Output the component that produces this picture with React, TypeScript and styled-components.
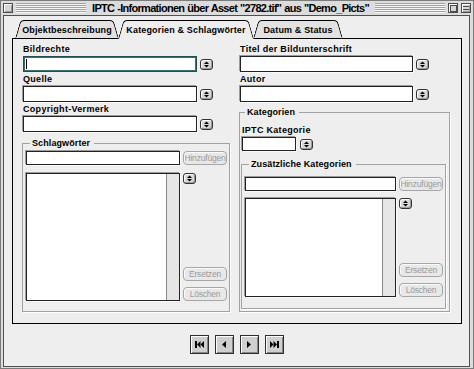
import React from "react";
import styled, { createGlobalStyle } from "styled-components";

const UI = `"Liberation Sans", Arial, sans-serif`;

const GlobalStyle = createGlobalStyle`
  html, body {
    margin: 0;
    padding: 0;
    background: #dcdcdc;
  }
  body {
    font-family: ${UI};
    color: #000;
  }
`;

const Window = styled.div`
  width: 474px;
  height: 369px;
  box-sizing: border-box;
  border: 1px solid #7b7b7b;
  background: #dcdcdc;
  display: flex;
  flex-direction: column;
`;

const TitleBar = styled.div`
  height: 14px;
  display: flex;
  align-items: center;
  gap: 3px;
  padding: 0 2px;
`;

const BoxButton = styled.div`
  position: relative;
  width: 10px;
  height: 10px;
  box-sizing: border-box;
  border: 1px solid #4b4b4b;
  background: #d6d6d6;
  box-shadow: inset 1px 1px 0 #fff, inset -1px -1px 0 #9a9a9a;
  flex: none;
`;

const ZoomMark = styled.div`
  position: absolute;
  left: 1px;
  top: 1px;
  width: 5px;
  height: 5px;
  border: 1px solid #4b4b4b;
`;

const ShadeMark = styled.div`
  position: absolute;
  left: 1px;
  right: 1px;
  top: 2px;
  height: 2px;
  border-top: 1px solid #4b4b4b;
  border-bottom: 1px solid #4b4b4b;
`;

const Stripes = styled.div`
  flex: 1;
  height: 10px;
  background: repeating-linear-gradient(
    to bottom,
    #a2a2a2 0 1px,
    #f6f6f6 1px 2px
  );
`;

const TitleText = styled.div`
  padding: 0 3px;
  font: bold 11px ${UI};
  line-height: 14px;
  white-space: nowrap;
  letter-spacing: -0.7px;
  word-spacing: 0.5px;
`;

const Content = styled.div`
  flex: 1;
  margin: 0 3px 1px 2px;
  border: 1px solid #505050;
  background: #eeeeee;
  display: flex;
  flex-direction: column;
  min-height: 0;
`;

const TabStrip = styled.div`
  display: flex;
  align-items: flex-end;
  margin: 4px 0 -1px 11px;
  height: 19px;
  position: relative;
  z-index: 1;
`;

const Tab = styled.div<{ $w: number; $active?: boolean }>`
  position: relative;
  z-index: ${(p) => (p.$active ? 2 : 1)};
  width: ${(p) => p.$w}px;
  height: 19px;
  margin-right: -1px;
  box-sizing: border-box;
  display: flex;
  align-items: center;
  justify-content: center;
  padding-top: 1px;
  font: bold 9px ${UI};
  letter-spacing: 0.15px;
  white-space: nowrap;

  &::before,
  &::after {
    content: "";
    position: absolute;
    top: 0;
    bottom: 0;
    z-index: -1;
    background: ${(p) => (p.$active ? "#eeeeee" : "#e2e2e2")};
    border: 1px solid #000;
    border-bottom-color: ${(p) => (p.$active ? "transparent" : "#000")};
  }
  &::before {
    left: 0;
    right: 50%;
    border-right: none;
    border-top-left-radius: 4px;
    transform: skewX(-16deg);
    transform-origin: bottom left;
  }
  &::after {
    left: 50%;
    right: 0;
    border-left: none;
    border-top-right-radius: 4px;
    transform: skewX(16deg);
    transform-origin: bottom right;
  }
`;

const Panel = styled.div`
  margin: 0 7px 0 8px;
  height: 286px;
  box-sizing: border-box;
  border: 1px solid #000;
  display: grid;
  grid-template-columns: 208px 211px;
  column-gap: 9px;
  padding: 3px 11px 11px 9px;
`;

const Column = styled.div`
  display: flex;
  flex-direction: column;
  min-height: 0;
`;

const FieldLabel = styled.div`
  height: 14px;
  padding-left: 1px;
  font: bold 9px ${UI};
  line-height: 14px;
  letter-spacing: 0.3px;
  white-space: nowrap;
`;

const FieldRow = styled.div<{ $h: number; $gap: number }>`
  height: ${(p) => p.$h}px;
  display: flex;
  align-items: center;
  gap: ${(p) => p.$gap}px;
  padding-left: 1px;
`;

const TextField = styled.div<{ $w?: number; $focus?: boolean }>`
  ${(p) => (p.$w ? `width: ${p.$w}px;` : "")}
  height: 100%;
  box-sizing: border-box;
  background: #fff;
  border: 1px solid ${(p) => (p.$focus ? "#224f4f" : "#222")};
  box-shadow: ${(p) =>
    p.$focus
      ? "inset 0 0 0 1px #3c6e6e"
      : "-1px -1px 0 #9c9c9c, 1px 1px 0 #fafafa"};
  display: flex;
  align-items: center;
  padding-left: 2px;
`;

const Caret = styled.span`
  width: 1px;
  height: 10px;
  background: #000;
`;

const StepperButton = styled.div`
  width: 13px;
  height: 11px;
  box-sizing: border-box;
  border: 1px solid #333;
  border-radius: 3px;
  background: #d8d8d8;
  box-shadow: inset 1px 1px 0 #fff, inset -1px -1px 0 #9c9c9c;
  display: flex;
  align-items: center;
  justify-content: center;
  flex: none;
`;

const Group = styled.fieldset<{ $pad: string; $mt: number }>`
  flex: 1;
  min-width: 0;
  min-height: 0;
  margin: ${(p) => p.$mt}px 0 0 0;
  padding: ${(p) => p.$pad};
  border: 1px solid #a2a2a2;
  box-shadow: 1px 1px 0 #fff;
  display: flex;
  flex-direction: column;
`;

const Legend = styled.legend`
  margin-left: 4px;
  padding: 0 4px 0 2px;
  font: bold 9px ${UI};
  line-height: 11px;
  height: 11px;
  letter-spacing: 0.1px;
  white-space: nowrap;
`;

const GroupBody = styled.div<{ $rowGap: number }>`
  flex: 1;
  display: grid;
  grid-template-columns: 1fr 44px;
  grid-template-rows: 14px 1fr;
  column-gap: 3px;
  row-gap: ${(p) => p.$rowGap}px;
  min-height: 0;
`;

const ListBox = styled.div`
  border: 1px solid #222;
  background: #fff;
  display: flex;
  justify-content: flex-end;
  box-shadow: -1px -1px 0 #9c9c9c, 1px 1px 0 #fafafa;
`;

const ScrollTrack = styled.div`
  width: 12px;
  background: #e6e6e6;
  border-left: 1px solid #8a8a8a;
`;

const SideColumn = styled.div`
  display: flex;
  flex-direction: column;
  align-items: flex-start;
  gap: 6px;
`;

const Spacer = styled.div`
  flex: 1;
`;

const PushButton = styled.div`
  width: 44px;
  height: 14px;
  box-sizing: border-box;
  border: 1px solid #a6a6a6;
  border-radius: 4px;
  background: #e8e8e8;
  box-shadow: inset 1px 1px 0 #fbfbfb;
  color: #9a9a9a;
  font: 8.5px ${UI};
  letter-spacing: -0.2px;
  display: flex;
  align-items: center;
  justify-content: center;
  white-space: nowrap;
  overflow: hidden;
`;

const NavRow = styled.div`
  flex: 1;
  display: flex;
  align-items: center;
  justify-content: center;
  gap: 6px;
  padding-bottom: 1px;
`;

const NavButton = styled.div`
  width: 19px;
  height: 19px;
  box-sizing: border-box;
  border: 1px solid #2e2e2e;
  background: #cfcfcf;
  box-shadow: inset 1px 1px 0 #fff, inset -1px -1px 0 #858585;
  display: flex;
  align-items: center;
  justify-content: center;
`;

const StepIcon = () => (
  <svg width="5" height="7" viewBox="0 0 5 7">
    <polygon points="0,3 2.5,0.5 5,3" />
    <polygon points="0,4 5,4 2.5,6.5" />
  </svg>
);

const Stepper = () => (
  <StepperButton>
    <StepIcon />
  </StepperButton>
);

const FirstIcon = () => (
  <svg width="9" height="7" viewBox="0 0 9 7">
    <rect x="0" y="0" width="2" height="7" />
    <polygon points="2,3.5 5.5,0 5.5,7" />
    <polygon points="5.5,3.5 9,0 9,7" />
  </svg>
);

const PrevIcon = () => (
  <svg width="4" height="7" viewBox="0 0 4 7">
    <polygon points="0,3.5 4,0 4,7" />
  </svg>
);

const NextIcon = () => (
  <svg width="4" height="7" viewBox="0 0 4 7">
    <polygon points="4,3.5 0,0 0,7" />
  </svg>
);

const LastIcon = () => (
  <svg width="9" height="7" viewBox="0 0 9 7">
    <polygon points="0,0 3.5,3.5 0,7" />
    <polygon points="3.5,0 7,3.5 3.5,7" />
    <rect x="7" y="0" width="2" height="7" />
  </svg>
);

const Field = ({
  label,
  width,
  focus,
}: {
  label: string;
  width: number;
  focus?: boolean;
}) => (
  <>
    <FieldLabel>{label}</FieldLabel>
    <FieldRow $h={16} $gap={3}>
      <TextField $w={width} $focus={focus}>
        {focus && <Caret />}
      </TextField>
      <Stepper />
    </FieldRow>
  </>
);

const KeywordBox = ({ listGap }: { listGap: number }) => (
  <GroupBody $rowGap={listGap}>
    <TextField />
    <PushButton>Hinzufügen</PushButton>
    <ListBox>
      <ScrollTrack />
    </ListBox>
    <SideColumn>
      <Stepper />
      <Spacer />
      <PushButton>Ersetzen</PushButton>
      <PushButton>Löschen</PushButton>
    </SideColumn>
  </GroupBody>
);

export default function App() {
  return (
    <>
      <GlobalStyle />
      <Window>
        <TitleBar>
          <BoxButton />
          <Stripes />
          <TitleText>
            IPTC -Informationen über Asset "2782.tif" aus "Demo_Picts"
          </TitleText>
          <Stripes />
          <BoxButton>
            <ZoomMark />
          </BoxButton>
          <BoxButton>
            <ShadeMark />
          </BoxButton>
        </TitleBar>
        <Content>
          <TabStrip>
            <Tab $w={104}>Objektbeschreibung</Tab>
            <Tab $w={136} $active>
              Kategorien &amp; Schlagwörter
            </Tab>
            <Tab $w={90}>Datum &amp; Status</Tab>
          </TabStrip>
          <Panel>
            <Column>
              <Field label="Bildrechte" width={174} focus />
              <Field label="Quelle" width={174} />
              <Field label="Copyright-Vermerk" width={174} />
              <Group $pad="2px 2px 10px 3px" $mt={6}>
                <Legend>Schlagwörter</Legend>
                <KeywordBox listGap={8} />
              </Group>
            </Column>
            <Column>
              <Field label="Titel der Bildunterschrift" width={173} />
              <Field label="Autor" width={173} />
              <Group $pad="5px 3px 2px 1px" $mt={5}>
                <Legend>Kategorien</Legend>
                <FieldLabel>IPTC Kategorie</FieldLabel>
                <FieldRow $h={14} $gap={4}>
                  <TextField $w={54} />
                  <Stepper />
                </FieldRow>
                <Group $pad="7px 2px 11px 3px" $mt={8}>
                  <Legend>Zusätzliche Kategorien</Legend>
                  <KeywordBox listGap={7} />
                </Group>
              </Group>
            </Column>
          </Panel>
          <NavRow>
            <NavButton>
              <FirstIcon />
            </NavButton>
            <NavButton>
              <PrevIcon />
            </NavButton>
            <NavButton>
              <NextIcon />
            </NavButton>
            <NavButton>
              <LastIcon />
            </NavButton>
          </NavRow>
        </Content>
      </Window>
    </>
  );
}
